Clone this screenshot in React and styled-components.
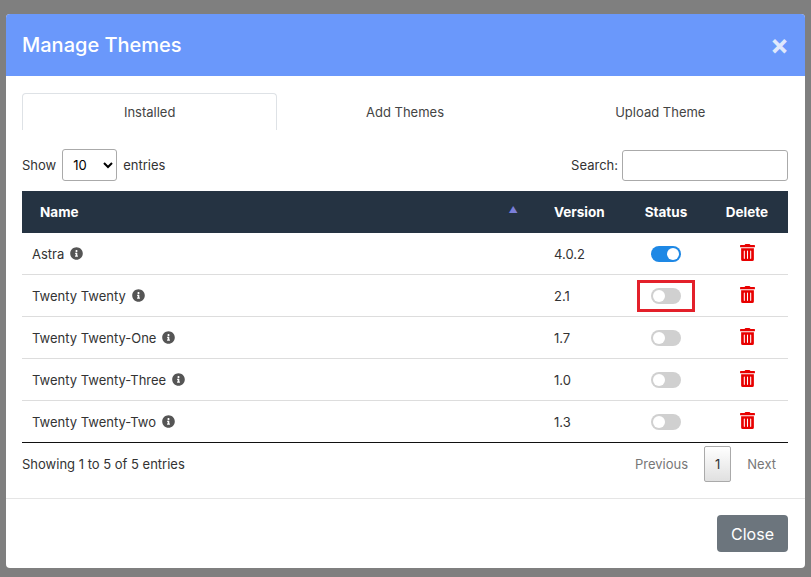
import React from 'react';
import styled, { createGlobalStyle } from 'styled-components';
import { FaTrashAlt, FaInfoCircle } from 'react-icons/fa';

const Global = createGlobalStyle`
  body { margin: 0; background: #7f7f7f; font-family: Inter, "Noto Sans", sans-serif; }
`;

const themes = [
  { name: 'Astra', version: '4.0.2', on: true },
  { name: 'Twenty Twenty', version: '2.1', marked: true },
  { name: 'Twenty Twenty-One', version: '1.7' },
  { name: 'Twenty Twenty-Three', version: '1.0' },
  { name: 'Twenty Twenty-Two', version: '1.3' },
];

export default function App() {
  return (
    <Page>
      <Global />
      <Modal>
        <Header>
          <h2>Manage Themes</h2>
          <X>×</X>
        </Header>
        <Body>
          <Tabs>
            <Tab active>Installed</Tab>
            <Tab>Add Themes</Tab>
            <Tab>Upload Theme</Tab>
          </Tabs>
          <Controls>
            <Inline>
              Show
              <Select defaultValue="10"><option>10</option></Select>
              entries
            </Inline>
            <Inline>
              Search:<Search />
            </Inline>
          </Controls>
          <Table>
            <thead>
              <tr>
                <th>Name<Sort>▲</Sort></th>
                <th style={{ width: 72 }}>Version</th>
                <th style={{ width: 80, textAlign: 'center' }}>Status</th>
                <th style={{ width: 82, textAlign: 'center' }}>Delete</th>
              </tr>
            </thead>
            <tbody>
              {themes.map((t) => (
                <tr key={t.name}>
                  <td>
                    <Inline>{t.name}<FaInfoCircle color="#555" size={13} /></Inline>
                  </td>
                  <td>{t.version}</td>
                  <td style={{ textAlign: 'center' }}>
                    <Marker marked={t.marked}><Toggle on={t.on} /></Marker>
                  </td>
                  <td style={{ textAlign: 'center' }}>
                    <FaTrashAlt color="#e80000" size={17} />
                  </td>
                </tr>
              ))}
            </tbody>
          </Table>
          <Controls bottom>
            <span>Showing 1 to 5 of 5 entries</span>
            <Pager>
              <span>Previous</span>
              <PageBtn>1</PageBtn>
              <span>Next</span>
            </Pager>
          </Controls>
        </Body>
        <Footer>
          <CloseBtn>Close</CloseBtn>
        </Footer>
      </Modal>
    </Page>
  );
}

const Page = styled.div`
  padding: 14px 6px 8px;
`;

const Modal = styled.div`
  background: #fff;
  border-radius: 4px;
  overflow: hidden;
  color: #333;
  font-size: 13px;
`;

const Header = styled.div`
  background: #6a98fb;
  height: 62px;
  display: flex;
  align-items: center;
  justify-content: space-between;
  padding: 0 16px;
  h2 { margin: 0; color: #fff; font-weight: 500; font-size: 20px; }
`;

const X = styled.span`
  color: #dfe8fc;
  font-size: 28px;
  font-weight: 700;
`;

const Body = styled.div`
  padding: 17px 17px 16px 16px;
  border-bottom: 1px solid #e5e5e5;
`;

const Tabs = styled.div`
  display: grid;
  grid-template-columns: repeat(3, 1fr);
  border-bottom: 1px solid #dee2e6;
`;

const Tab = styled.div`
  height: 36px;
  display: flex;
  align-items: center;
  justify-content: center;
  border: 1px solid ${(p) => (p.active ? '#dee2e6' : 'transparent')};
  border-bottom: none;
  border-radius: 4px 4px 0 0;
  margin-bottom: -1px;
  background: #fff;
  color: #444;
`;

const Controls = styled.div`
  display: flex;
  justify-content: space-between;
  align-items: center;
  margin: ${(p) => (p.bottom ? '3px 0 0' : '19px 0 10px')};
`;

const Inline = styled.span`
  display: inline-flex;
  align-items: center;
  gap: 6px;
`;

const Select = styled.select`
  width: 55px;
  height: 32px;
  border: 1px solid #aaa;
  border-radius: 3px;
  background: #fff;
  font: inherit;
  padding-left: 6px;
`;

const Search = styled.input`
  width: 160px;
  height: 27px;
  border: 1px solid #aaa;
  border-radius: 3px;
  margin-left: -2px;
`;

const Sort = styled.span`
  float: right;
  color: #7b7fd9;
  font-size: 9px;
`;

const Table = styled.table`
  width: 100%;
  border-collapse: collapse;
  border-bottom: 1px solid #111;
  th {
    background: #253342;
    color: #fff;
    font-weight: 700;
    text-align: left;
    height: 42px;
    padding: 0 18px;
    font-size: 13.5px;
  }
  th:nth-child(2) { padding: 0 0 0 18px; }
  td {
    height: 41px;
    padding: 0 10px;
    border-top: 1px solid #ddd;
  }
  td:nth-child(2) { padding: 0 0 0 18px; }
  th:nth-child(3), td:nth-child(3), th:nth-child(4), td:nth-child(4) { padding: 0; }
  tbody tr:first-child td { border-top: none; }
`;

const Marker = styled.span`
  display: inline-flex;
  padding: 5px 11px;
  border: 3px solid ${(p) => (p.marked ? '#e3202a' : 'transparent')};
`;

const Toggle = styled.span`
  width: 30px;
  height: 16px;
  border-radius: 8px;
  background: ${(p) => (p.on ? '#1e88e5' : '#d0d0d0')};
  position: relative;
  &::after {
    content: '';
    position: absolute;
    top: 2px;
    left: ${(p) => (p.on ? '16px' : '2px')};
    width: 12px;
    height: 12px;
    border-radius: 50%;
    background: #fff;
  }
`;

const Pager = styled.div`
  display: flex;
  align-items: center;
  gap: 16px;
  color: #777;
  margin-right: 12px;
`;

const PageBtn = styled.span`
  border: 1px solid #aaa;
  background: linear-gradient(#fff, #e0e0e0);
  border-radius: 2px;
  padding: 9px 10px;
  color: #333;
`;

const Footer = styled.div`
  display: flex;
  justify-content: flex-end;
  padding: 16px 17px;
`;

const CloseBtn = styled.button`
  background: #6c757d;
  color: #fff;
  border: none;
  border-radius: 4px;
  font: inherit;
  font-size: 16px;
  width: 71px;
  height: 37px;
`;
